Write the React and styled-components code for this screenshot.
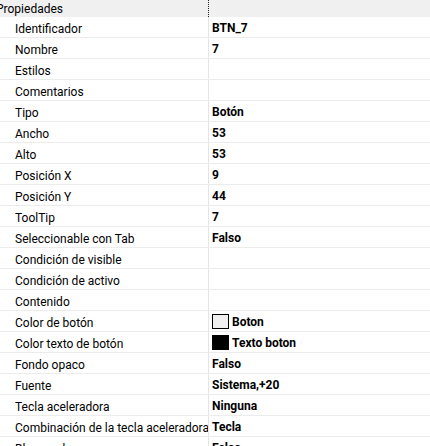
import styled, { createGlobalStyle } from "styled-components";

const GlobalStyle = createGlobalStyle`
  html, body {
    margin: 0;
    padding: 0;
    background: #ffffff;
  }
  body {
    font-family: Roboto, "Noto Sans", sans-serif;
    font-size: 12px;
    color: #000000;
  }
`;

const Panel = styled.div`
  width: 430px;
  height: 446px;
  overflow: hidden;
  background: #ffffff;
`;

const Header = styled.div`
  display: grid;
  grid-template-columns: 209px 1fr;
  height: 17px;
  background: #f0f0f0;
`;

const HeaderTitle = styled.div`
  border-right: 1px dotted #222;
  line-height: 18px;
  text-indent: -4px;
  white-space: nowrap;
  overflow: hidden;
`;

const Row = styled.div`
  display: grid;
  grid-template-columns: 209px 1fr;
  height: 20px;
  border-bottom: 1px solid #ececec;
`;

const Label = styled.div`
  padding-left: 15px;
  padding-top: 2px;
  line-height: 20px;
  border-right: 1px solid #e4e4e4;
  white-space: nowrap;
  overflow: hidden;
`;

const Value = styled.div`
  display: flex;
  align-items: center;
  gap: 3px;
  padding-left: 3px;
  padding-top: 2px;
  font-weight: bold;
  white-space: nowrap;
`;

const Swatch = styled.span`
  display: inline-block;
  width: 15px;
  height: 13px;
  margin-top: -2px;
  background: ${(p) => p.$color};
  border: 1px solid #000;
`;

const rows = [
  ["Identificador", "BTN_7"],
  ["Nombre", "7"],
  ["Estilos", ""],
  ["Comentarios", ""],
  ["Tipo", "Botón"],
  ["Ancho", "53"],
  ["Alto", "53"],
  ["Posición X", "9"],
  ["Posición Y", "44"],
  ["ToolTip", "7"],
  ["Seleccionable con Tab", "Falso"],
  ["Condición de visible", ""],
  ["Condición de activo", ""],
  ["Contenido", ""],
  ["Color de botón", "Boton", "#f0f0f0"],
  ["Color texto de botón", "Texto boton", "#000000"],
  ["Fondo opaco", "Falso"],
  ["Fuente", "Sistema,+20"],
  ["Tecla aceleradora", "Ninguna"],
  ["Combinación de la tecla aceleradora", "Tecla"],
  ["Bloqueado", "Falso"],
];

export default function App() {
  return (
    <Panel>
      <GlobalStyle />
      <Header>
        <HeaderTitle>Propiedades</HeaderTitle>
        <div />
      </Header>
      {rows.map(([label, value, color]) => (
        <Row key={label}>
          <Label>{label}</Label>
          <Value>
            {color && <Swatch $color={color} />}
            {value}
          </Value>
        </Row>
      ))}
    </Panel>
  );
}
